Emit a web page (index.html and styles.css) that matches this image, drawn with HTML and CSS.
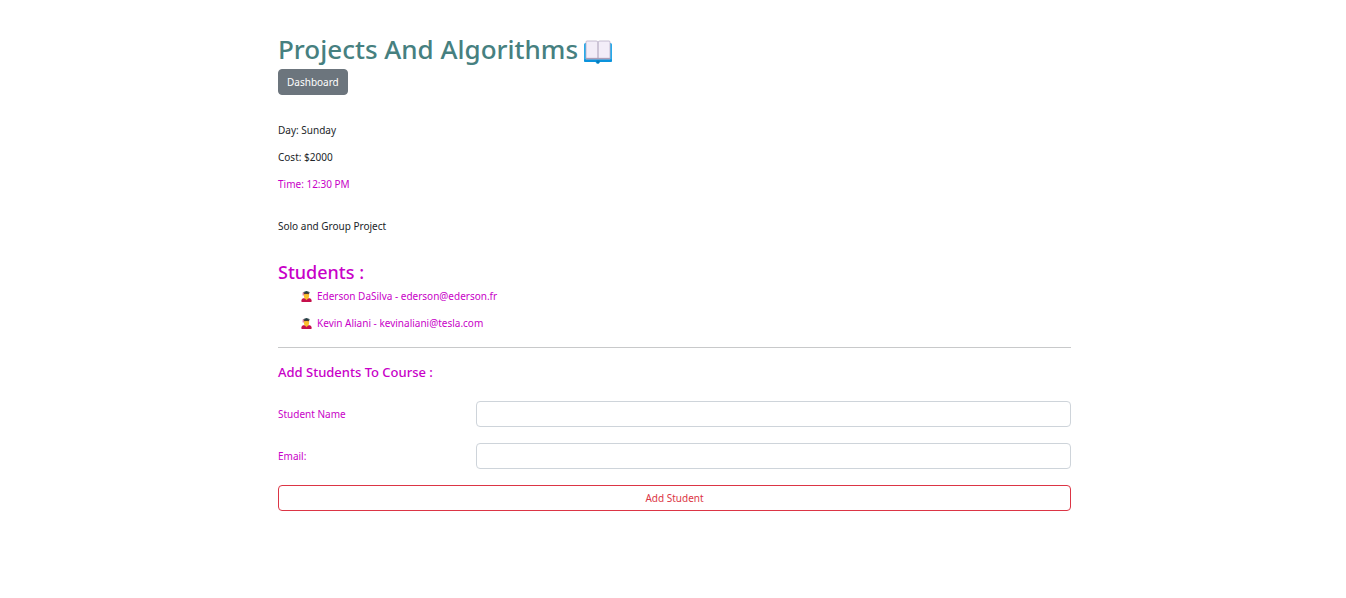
FILE: index.html
```html
<!DOCTYPE html>
<html lang="en">
<head>
<meta charset="utf-8">
<meta name="viewport" content="width=device-width, initial-scale=1">
<title>Projects And Algorithms</title>
<link rel="stylesheet" href="styles.css">
</head>
<body>
<svg class="sprite" aria-hidden="true">
  <symbol id="student" viewBox="0 0 11 11">
    <path d="M0.500 11V9.200Q0.500 7.600 2.200 7.200H8.800Q10.500 7.600 10.500 9.200V11Z" fill="#c5104c"/>
    <path d="M3.800 6H7.200V7.500L5.500 9.200L3.800 7.500Z" fill="#f4a628"/>
    <ellipse cx="5.500" cy="4.700" rx="2.600" ry="3" fill="#fcc02e"/>
    <path d="M2.800 3.300V1.800H8.200V3.300Q5.500 2.500 2.800 3.300Z" fill="#5b3a34"/>
    <path d="M1.800 1.300L5.500 0L9.200 1.300L5.500 2.600Z" fill="#263f45"/>
    <path d="M2.200 1.500V4.500" stroke="#c5104c" stroke-width=".7"/>
  </symbol>
</svg>
<main class="container">
  <header class="header">
    <h1 class="title">Projects And Algorithms
      <svg class="book" viewBox="0 0 28 24" role="img" aria-label="Open book">
        <path d="M1.500 3H26.500Q28 3 28 4.500V20.500Q28 22 26.500 22H16L15 23.500H12.500L11.500 22H1.500Q0 22 0 20.500V4.500Q0 3 1.500 3Z" fill="#26a9ea"/>
        <path d="M0 19.500H28V20.500Q28 22 26.500 22H1.500Q0 22 0 20.500Z" fill="#0c93dc"/>
        <path d="M12.500 20.500H15.500V22L14.700 23.500H13.200L12.500 22Z" fill="#087bb9"/>
        <path d="M2 2Q2 1 3 1H12Q13.500 1 14 2Q14.500 1 16 1H25Q26 1 26 2V19H2Z" fill="#f3edf8" stroke="#b8adc5" stroke-width=".8"/>
        <path d="M2 18.500H26" fill="none" stroke="#ae9eb8" stroke-width="1.300"/>
        <path d="M14 2V19" stroke="#a79bb5"/>
      </svg>
    </h1>
    <button class="btn btn-secondary" type="button">Dashboard</button>
  </header>
  <section class="details">
    <p>Day: Sunday</p>
    <p>Cost: $2000</p>
    <p class="accent">Time: 12:30 PM</p>
  </section>
  <p class="description">Solo and Group Project</p>
  <section class="accent">
    <h2 class="students-title">Students :</h2>
    <ul class="students">
      <li><svg class="student-icon" aria-hidden="true"><use href="#student"/></svg>Ederson DaSilva - ederson@ederson.fr</li>
      <li><svg class="student-icon" aria-hidden="true"><use href="#student"/></svg>Kevin Aliani - kevinaliani@tesla.com</li>
    </ul>
  </section>
  <hr class="divider">
  <section class="accent">
    <h3 class="form-title">Add Students To Course :</h3>
    <form class="form">
      <div class="row">
        <label for="name">Student Name</label>
        <input id="name" type="text">
      </div>
      <div class="row">
        <label for="email">Email:</label>
        <input id="email" type="text">
      </div>
      <button class="btn btn-outline" type="submit">Add Student</button>
    </form>
  </section>
</main>
</body>
</html>
```
FILE: styles.css
```css
* { box-sizing: border-box; }
body {
  margin: 0;
  padding: 31px 16px 32px 19px;
  background: #fff;
  color: #212529;
  font: 10px/16px "Noto Sans", "Open Sans", sans-serif;
}
h1, h2, h3, p, ul { margin: 0; }
.sprite { display: none; }
.container { max-width: 793px; margin: 0 auto; }
.accent { color: #c800c8; }
.header { display: flex; flex-direction: column; align-items: flex-start; }
.title {
  display: flex;
  align-items: center;
  gap: 6px;
  padding-bottom: 1px;
  color: #468080;
  font: 500 26px/37px "Noto Sans", "Open Sans", sans-serif;
}
.book { width: 28px; height: 24px; margin-top: 4px; }
.btn {
  height: 26px;
  padding: 0 8px;
  border: 1px solid;
  border-radius: 4px;
  font: inherit;
  cursor: pointer;
}
.btn-secondary { background: #6c757d; border-color: #6c757d; color: #fff; }
.btn-outline { width: 100%; background: #fff; border-color: #dc3545; color: #dc3545; }
.details { display: grid; gap: 11px; margin-top: 27px; }
.description { margin-top: 26px; }
.students-title { margin-top: 27px; font: 500 18px/22px "Noto Sans", "Open Sans", sans-serif; }
.students { display: grid; gap: 11px; margin-top: 5px; padding-left: 23px; list-style: none; }
.students li { display: flex; align-items: center; gap: 5px; }
.student-icon { width: 11px; height: 11px; }
.divider { height: 1px; margin: 16px 0; border: 0; background: #c8c9ca; }
.form-title { font: 500 13px/16px "Noto Sans", "Open Sans", sans-serif; }
.form { display: grid; gap: 16px; margin-top: 21px; }
.row { display: grid; grid-template-columns: 1fr 3fr; align-items: center; }
.row input {
  width: 100%;
  height: 26px;
  padding: 4px 8px;
  border: 1px solid #ced4da;
  border-radius: 4px;
  background: #fff;
  color: #212529;
  font: inherit;
}
```
